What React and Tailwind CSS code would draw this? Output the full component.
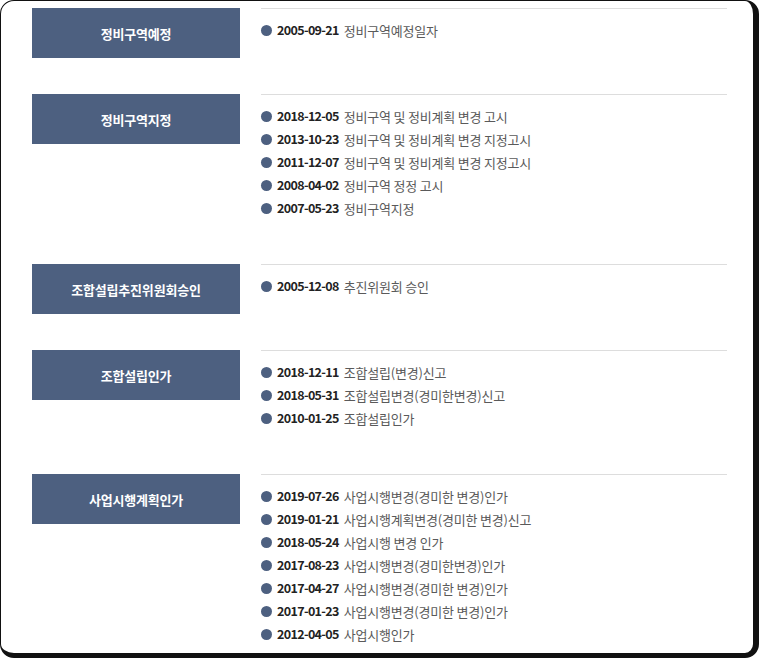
const sections = [
  {
    title: '정비구역예정',
    items: [['2005-09-21', '정비구역예정일자']],
  },
  {
    title: '정비구역지정',
    items: [
      ['2018-12-05', '정비구역 및 정비계획 변경 고시'],
      ['2013-10-23', '정비구역 및 정비계획 변경 지정고시'],
      ['2011-12-07', '정비구역 및 정비계획 변경 지정고시'],
      ['2008-04-02', '정비구역 정정 고시'],
      ['2007-05-23', '정비구역지정'],
    ],
  },
  {
    title: '조합설립추진위원회승인',
    items: [['2005-12-08', '추진위원회 승인']],
  },
  {
    title: '조합설립인가',
    items: [
      ['2018-12-11', '조합설립(변경)신고'],
      ['2018-05-31', '조합설립변경(경미한변경)신고'],
      ['2010-01-25', '조합설립인가'],
    ],
  },
  {
    title: '사업시행계획인가',
    items: [
      ['2019-07-26', '사업시행변경(경미한 변경)인가'],
      ['2019-01-21', '사업시행계획변경(경미한 변경)신고'],
      ['2018-05-24', '사업시행 변경 인가'],
      ['2017-08-23', '사업시행변경(경미한변경)인가'],
      ['2017-04-27', '사업시행변경(경미한 변경)인가'],
      ['2017-01-23', '사업시행변경(경미한 변경)인가'],
      ['2012-04-05', '사업시행인가'],
    ],
  },
];

function Section({ title, items }) {
  return (
    <div className="flex gap-[21px] mb-9">
      <div className="w-[208px] h-[50px] shrink-0 bg-[#4d6080] flex items-center justify-center pt-[2px] text-white text-[13px] font-bold tracking-[-0.2px]">
        {title}
      </div>
      <ul className="flex-1 border-t border-[#dddddd] pt-[10px] pb-2">
        {items.map(([date, text]) => (
          <li key={date + text} className="h-[23px] flex items-center">
            <span className="w-[11px] h-[11px] rounded-full bg-[#4d6080] mr-[5px]" />
            <span className="font-bold text-[#222222] text-[12.5px] tracking-[-0.65px] mr-[5px]">{date}</span>
            <span className="text-[#5a5a5a] text-[13px] tracking-[-0.2px]">{text}</span>
          </li>
        ))}
      </ul>
    </div>
  );
}

export default function App() {
  return (
    <div
      className="w-[759px] h-[658px] bg-white"
      style={{ fontFamily: '"Noto Sans CJK KR", "Noto Sans", sans-serif' }}
    >
      <div className="h-full rounded-[14px] border-t border-l border-r-[6px] border-b-[5px] border-[#111111] bg-white pt-[7px] pl-[31px] pr-[26px] overflow-hidden">
        {sections.map((s) => (
          <Section key={s.title} {...s} />
        ))}
      </div>
    </div>
  );
}
